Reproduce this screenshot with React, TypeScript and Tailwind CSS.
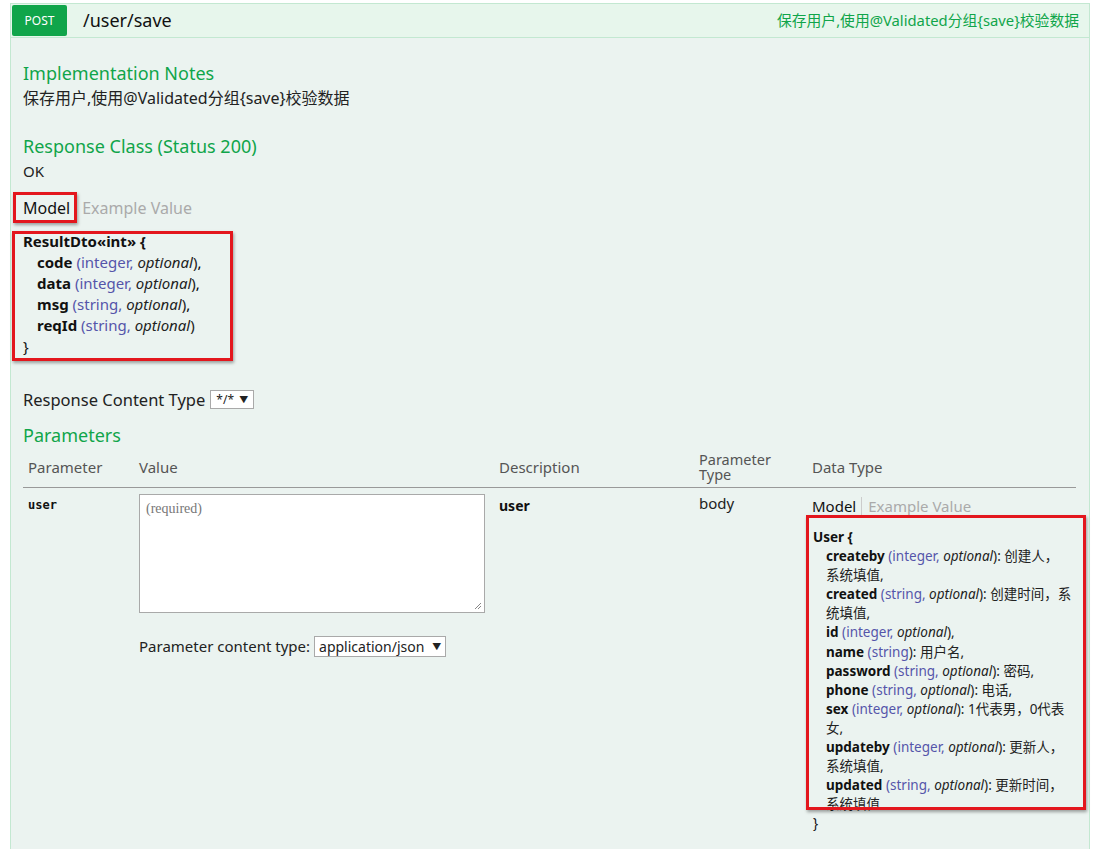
const sans = "font-['Noto_Sans','Noto_Sans_CJK_SC',sans-serif]";

function RedBox({ className }: { className: string }) {
  return (
    <div
      className={`pointer-events-none absolute border-[3px] border-[#e3161d] shadow-[1px_2px_3px_rgba(0,0,0,0.35)] ${className}`}
    />
  );
}

function Prop({
  name,
  type,
  optional = true,
  desc,
  last = false,
}: {
  name: string;
  type: string;
  optional?: boolean;
  desc?: React.ReactNode;
  last?: boolean;
}) {
  return (
    <div className="pl-[14px]">
      <span className="font-bold text-[#111]">{name}</span>{" "}
      <span className="text-[#55a]">
        ({type}
        {optional && (
          <>
            , <span className="italic text-[#222]">optional</span>
          </>
        )}
      </span>
      <span className="text-[#222]">)</span>
      {desc ? <span className="text-[#222]">: {desc}</span> : !last && ","}
    </div>
  );
}

function Tabs({ size }: { size: string }) {
  return (
    <div className={`flex items-center ${size}`}>
      <span className="text-[#111] pr-[5px]">Model</span>
      <span className="border-l border-[#ccc] pl-[6px] text-[#aaa]">Example Value</span>
    </div>
  );
}

export default function App() {
  return (
    <div className={`min-h-[849px] bg-white pl-[10px] pr-[15px] pt-[3px] ${sans}`}>
      {/* operation heading */}
      <div className="flex h-[35px] items-center border border-[#c3e8d1] bg-[#e7f6ec] pl-[1px] pr-[10px]">
        <div className="flex h-[31px] w-[55px] items-center justify-center rounded-[2px] bg-[#10a54a] text-[12px] text-white">
          POST
        </div>
        <div className="ml-[16px] text-[18px] text-[#111]">/user/save</div>
        <div className="ml-auto text-[14.8px] text-[#10a54a]">保存用户,使用@Validated分组{"{save}"}校验数据</div>
      </div>

      {/* operation content */}
      <div className="border border-t-0 border-[#c3e8d1] bg-[#ebf3f0] pl-[12px] pr-[12px] pt-[23px] pb-[30px]">
        <h4 className="text-[18px] leading-[24px] text-[#10a54a]">Implementation Notes</h4>
        <p className="mt-[3px] text-[16px] leading-[20px] text-[#222]">保存用户,使用@Validated分组{"{save}"}校验数据</p>

        <h4 className="mt-[26px] text-[18px] leading-[24px] text-[#10a54a]">Response Class (Status 200)</h4>
        <p className="mt-[3px] text-[15px] leading-[20px] text-[#222]">OK</p>

        <div className="relative mt-[17px]">
          <Tabs size="text-[16px] leading-[20px]" />
          <RedBox className="left-[-10px] top-[-6px] h-[31px] w-[64px]" />
        </div>

        <div className="relative mt-[13px] text-[15px] leading-[21px]">
          <div className="font-bold text-[#111]">ResultDto«int» {"{"}</div>
          <Prop name="code" type="integer" />
          <Prop name="data" type="integer" />
          <Prop name="msg" type="string" />
          <Prop name="reqId" type="string" last />
          <div className="text-[#111]">{"}"}</div>
          <RedBox className="left-[-11px] top-[0px] h-[130px] w-[221px]" />
        </div>

        <div className="mt-[32px] flex items-center text-[16.5px] leading-[21px] text-[#222]">
          Response Content Type
          <div className="ml-[5px] flex h-[19px] w-[44px] items-center justify-between border border-[#a9a9a9] bg-white px-[5px] text-[12px] text-[#222]">
            <span>*/*</span>
            <span className="text-[9px]">▼</span>
          </div>
        </div>

        <h4 className="mt-[13px] text-[18px] leading-[24px] text-[#10a54a]">Parameters</h4>

        <div className="mr-[1px]">
          <div className="grid h-[41px] grid-cols-[111px_360px_200px_113px_1fr] items-center border-b border-[#999] text-[15px] text-[#555]">
            <div className="pl-[5px]">Parameter</div>
            <div className="pl-[5px]">Value</div>
            <div className="pl-[5px]">Description</div>
            <div className="pl-[5px] text-[14.5px] leading-[15.5px]">
              Parameter
              <br />
              Type
            </div>
            <div className="pl-[5px]">Data Type</div>
          </div>

          <div className="grid grid-cols-[111px_360px_200px_113px_1fr] pt-[6px] text-[15px] text-[#222]">
            <div className="pl-[5px] pt-[2px] font-['DejaVu_Sans_Mono',monospace] text-[12px] font-bold text-[#111]">user</div>
            <div className="pl-[5px]">
              <div className="relative h-[119px] w-[346px] border border-[#a9a9a9] bg-white px-[6px] py-[3px] font-['Liberation_Serif',serif] text-[14px] text-[#777]">
                (required)
                <svg className="absolute bottom-[2px] right-[2px]" width="9" height="9" viewBox="0 0 9 9">
                  <path d="M8 2 L2 8 M8 5 L5 8" stroke="#888" strokeWidth="1" />
                </svg>
              </div>
              <div className="mt-[22px] flex items-center">
                Parameter content type:
                <div className="ml-[4px] flex h-[21px] items-center gap-[8px] border border-[#a9a9a9] bg-white px-[4px] text-[14px]">
                  <span>application/json</span>
                  <span className="text-[9px]">▼</span>
                </div>
              </div>
            </div>
            <div className="pl-[5px] pt-[1px] text-[14px] font-bold text-[#111]">user</div>
            <div className="pl-[5px] leading-[18px]">body</div>
            <div className="pl-[5px] pt-[3px]">
              <Tabs size="text-[15px] leading-[19px]" />
              <div className="relative mt-[12px] text-[13.5px] leading-[19.1px]">
                <div className="pl-[1px] font-bold text-[#111]">User {"{"}</div>
                <Prop
                  name="createby"
                  type="integer"
                  desc={
                    <>
                      创建人，
                      <br />
                      系统填值,
                    </>
                  }
                />
                <Prop
                  name="created"
                  type="string"
                  desc={
                    <>
                      创建时间，系
                      <br />
                      统填值,
                    </>
                  }
                />
                <Prop name="id" type="integer" />
                <Prop name="name" type="string" optional={false} desc="用户名," />
                <Prop name="password" type="string" desc="密码," />
                <Prop name="phone" type="string" desc="电话," />
                <Prop
                  name="sex"
                  type="integer"
                  desc={
                    <>
                      1代表男，0代表
                      <br />
                      女,
                    </>
                  }
                />
                <Prop
                  name="updateby"
                  type="integer"
                  desc={
                    <>
                      更新人，
                      <br />
                      系统填值,
                    </>
                  }
                />
                <Prop
                  name="updated"
                  type="string"
                  desc={
                    <>
                      更新时间，
                      <br />
                      系统填值
                    </>
                  }
                />
                <div className="pl-[1px] text-[#111]">{"}"}</div>
                <RedBox className="left-[-6px] top-[-13px] h-[295px] w-[280px]" />
              </div>
            </div>
          </div>
        </div>
      </div>
    </div>
  );
}
